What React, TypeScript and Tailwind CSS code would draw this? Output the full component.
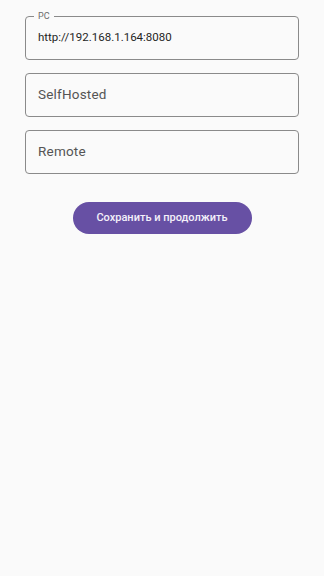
export default function App() {
  return (
    <div
      className="w-[324px] h-[576px] bg-[#fafafa] flex flex-col items-center pt-[16px]"
      style={{ fontFamily: "Roboto, 'Noto Sans', sans-serif" }}
    >
      <div className="w-[274px] flex flex-col gap-[13px]">
        <div className="relative h-[44px] rounded-[4px] border border-[#8a8a8a] flex items-center px-[12px]">
          <span className="absolute left-[8px] -top-[7px] px-[4px] bg-[#fafafa] text-[9px] leading-[12px] text-[#6b6b6b]">
            PC
          </span>
          <span className="text-[11.5px] text-[#1f1f1f]">http://192.168.1.164:8080</span>
        </div>
        <div className="h-[44px] rounded-[4px] border border-[#8a8a8a] flex items-center px-[12px]">
          <span className="text-[13.5px] text-[#555] tracking-[0.2px] -mt-[2px]">SelfHosted</span>
        </div>
        <div className="h-[44px] rounded-[4px] border border-[#8a8a8a] flex items-center px-[12px]">
          <span className="text-[13.5px] text-[#555] tracking-[0.2px] -mt-[2px]">Remote</span>
        </div>
      </div>
      <button className="mt-[28px] w-[179px] h-[32px] rounded-full bg-[#6750a4] text-[#f4f0fa] text-[11px] font-medium">
        Сохранить и продолжить
      </button>
    </div>
  );
}
